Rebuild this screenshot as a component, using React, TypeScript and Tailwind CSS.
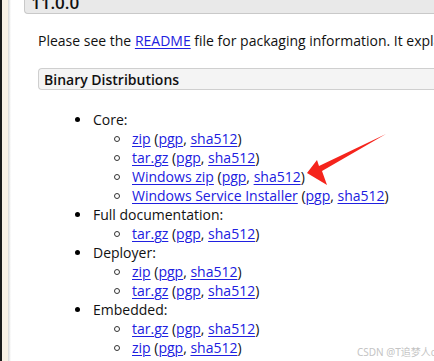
import React from 'react';

const font = { fontFamily: '"Open Sans", "Noto Sans", sans-serif' };

const Link: React.FC<{ children: React.ReactNode }> = ({ children }) => (
  <a href="#" className="text-[#2020e0] underline underline-offset-2 decoration-1">
    {children}
  </a>
);

const Sub: React.FC<{ name: string }> = ({ name }) => (
  <div className="flex h-[19px] items-center pl-[103px]">
    <span className="h-[6px] w-[6px] shrink-0 rounded-full border border-[#333]" />
    <span className="ml-[12px] whitespace-nowrap">
      <Link>{name}</Link> (<Link>pgp</Link>, <Link>sha512</Link>)
    </span>
  </div>
);

const Top: React.FC<{ label: string; items: string[] }> = ({ label, items }) => (
  <div>
    <div className="flex h-[19px] items-center pl-[64px]">
      <span className="h-[5px] w-[5px] shrink-0 rounded-full bg-black" />
      <span className="ml-[13px]">{label}</span>
    </div>
    {items.map((n, i) => (
      <Sub key={i} name={n} />
    ))}
  </div>
);

export default function App() {
  return (
    <div className="relative flex h-[361px] w-[434px] overflow-hidden bg-white text-[14px] text-[#111]" style={font}>
      <div className="w-[2px] shrink-0 bg-[#1c1c1c]" />
      <div className="w-[6px] shrink-0 bg-[#faf2e6]" />
      <div className="w-[3px] shrink-0 bg-gradient-to-r from-[#d8d8d8] to-white" />
      <div className="min-w-0 flex-1">
        <div className="-mt-[16px] ml-[13px] flex h-[30px] items-end rounded-bl-[4px] border border-r-0 border-[#c9c9c9] bg-[#e9e9e9] pl-[6px]">
          <span className="text-[17px] font-semibold leading-[20px]">11.0.0</span>
        </div>
        <p className="mt-[16px] whitespace-nowrap pl-[27px] leading-[21px]">
          Please see the <Link>README</Link> file for packaging information. It explains what every distribution contains.
        </p>
        <div className="ml-[27px] mt-[17px] flex h-[22px] items-center rounded-l-[4px] border border-r-0 border-[#cfcfcf] bg-[#f4f4f4] pl-[5px] font-semibold">
          Binary Distributions
        </div>
        <div className="mt-[20px]">
          <Top label="Core:" items={['zip', 'tar.gz', 'Windows zip', 'Windows Service Installer']} />
          <Top label="Full documentation:" items={['tar.gz']} />
          <Top label="Deployer:" items={['zip', 'tar.gz']} />
          <Top label="Embedded:" items={['tar.gz', 'zip']} />
        </div>
      </div>

      {/* red annotation arrow */}
      <svg className="absolute left-[300px] top-[128px]" width="90" height="60" viewBox="0 0 90 60">
        <polygon points="7,45 17,32 19,38 86,6 22,43 27,57" fill="#f5241c" />
      </svg>

      <span
        className="absolute left-[357px] top-[345px] whitespace-nowrap text-[10px] text-[#c4c4c4]"
        style={{ fontFamily: '"Noto Sans", "Noto Sans CJK SC", sans-serif' }}
      >
        CSDN @T追梦人c
      </span>
    </div>
  );
}
